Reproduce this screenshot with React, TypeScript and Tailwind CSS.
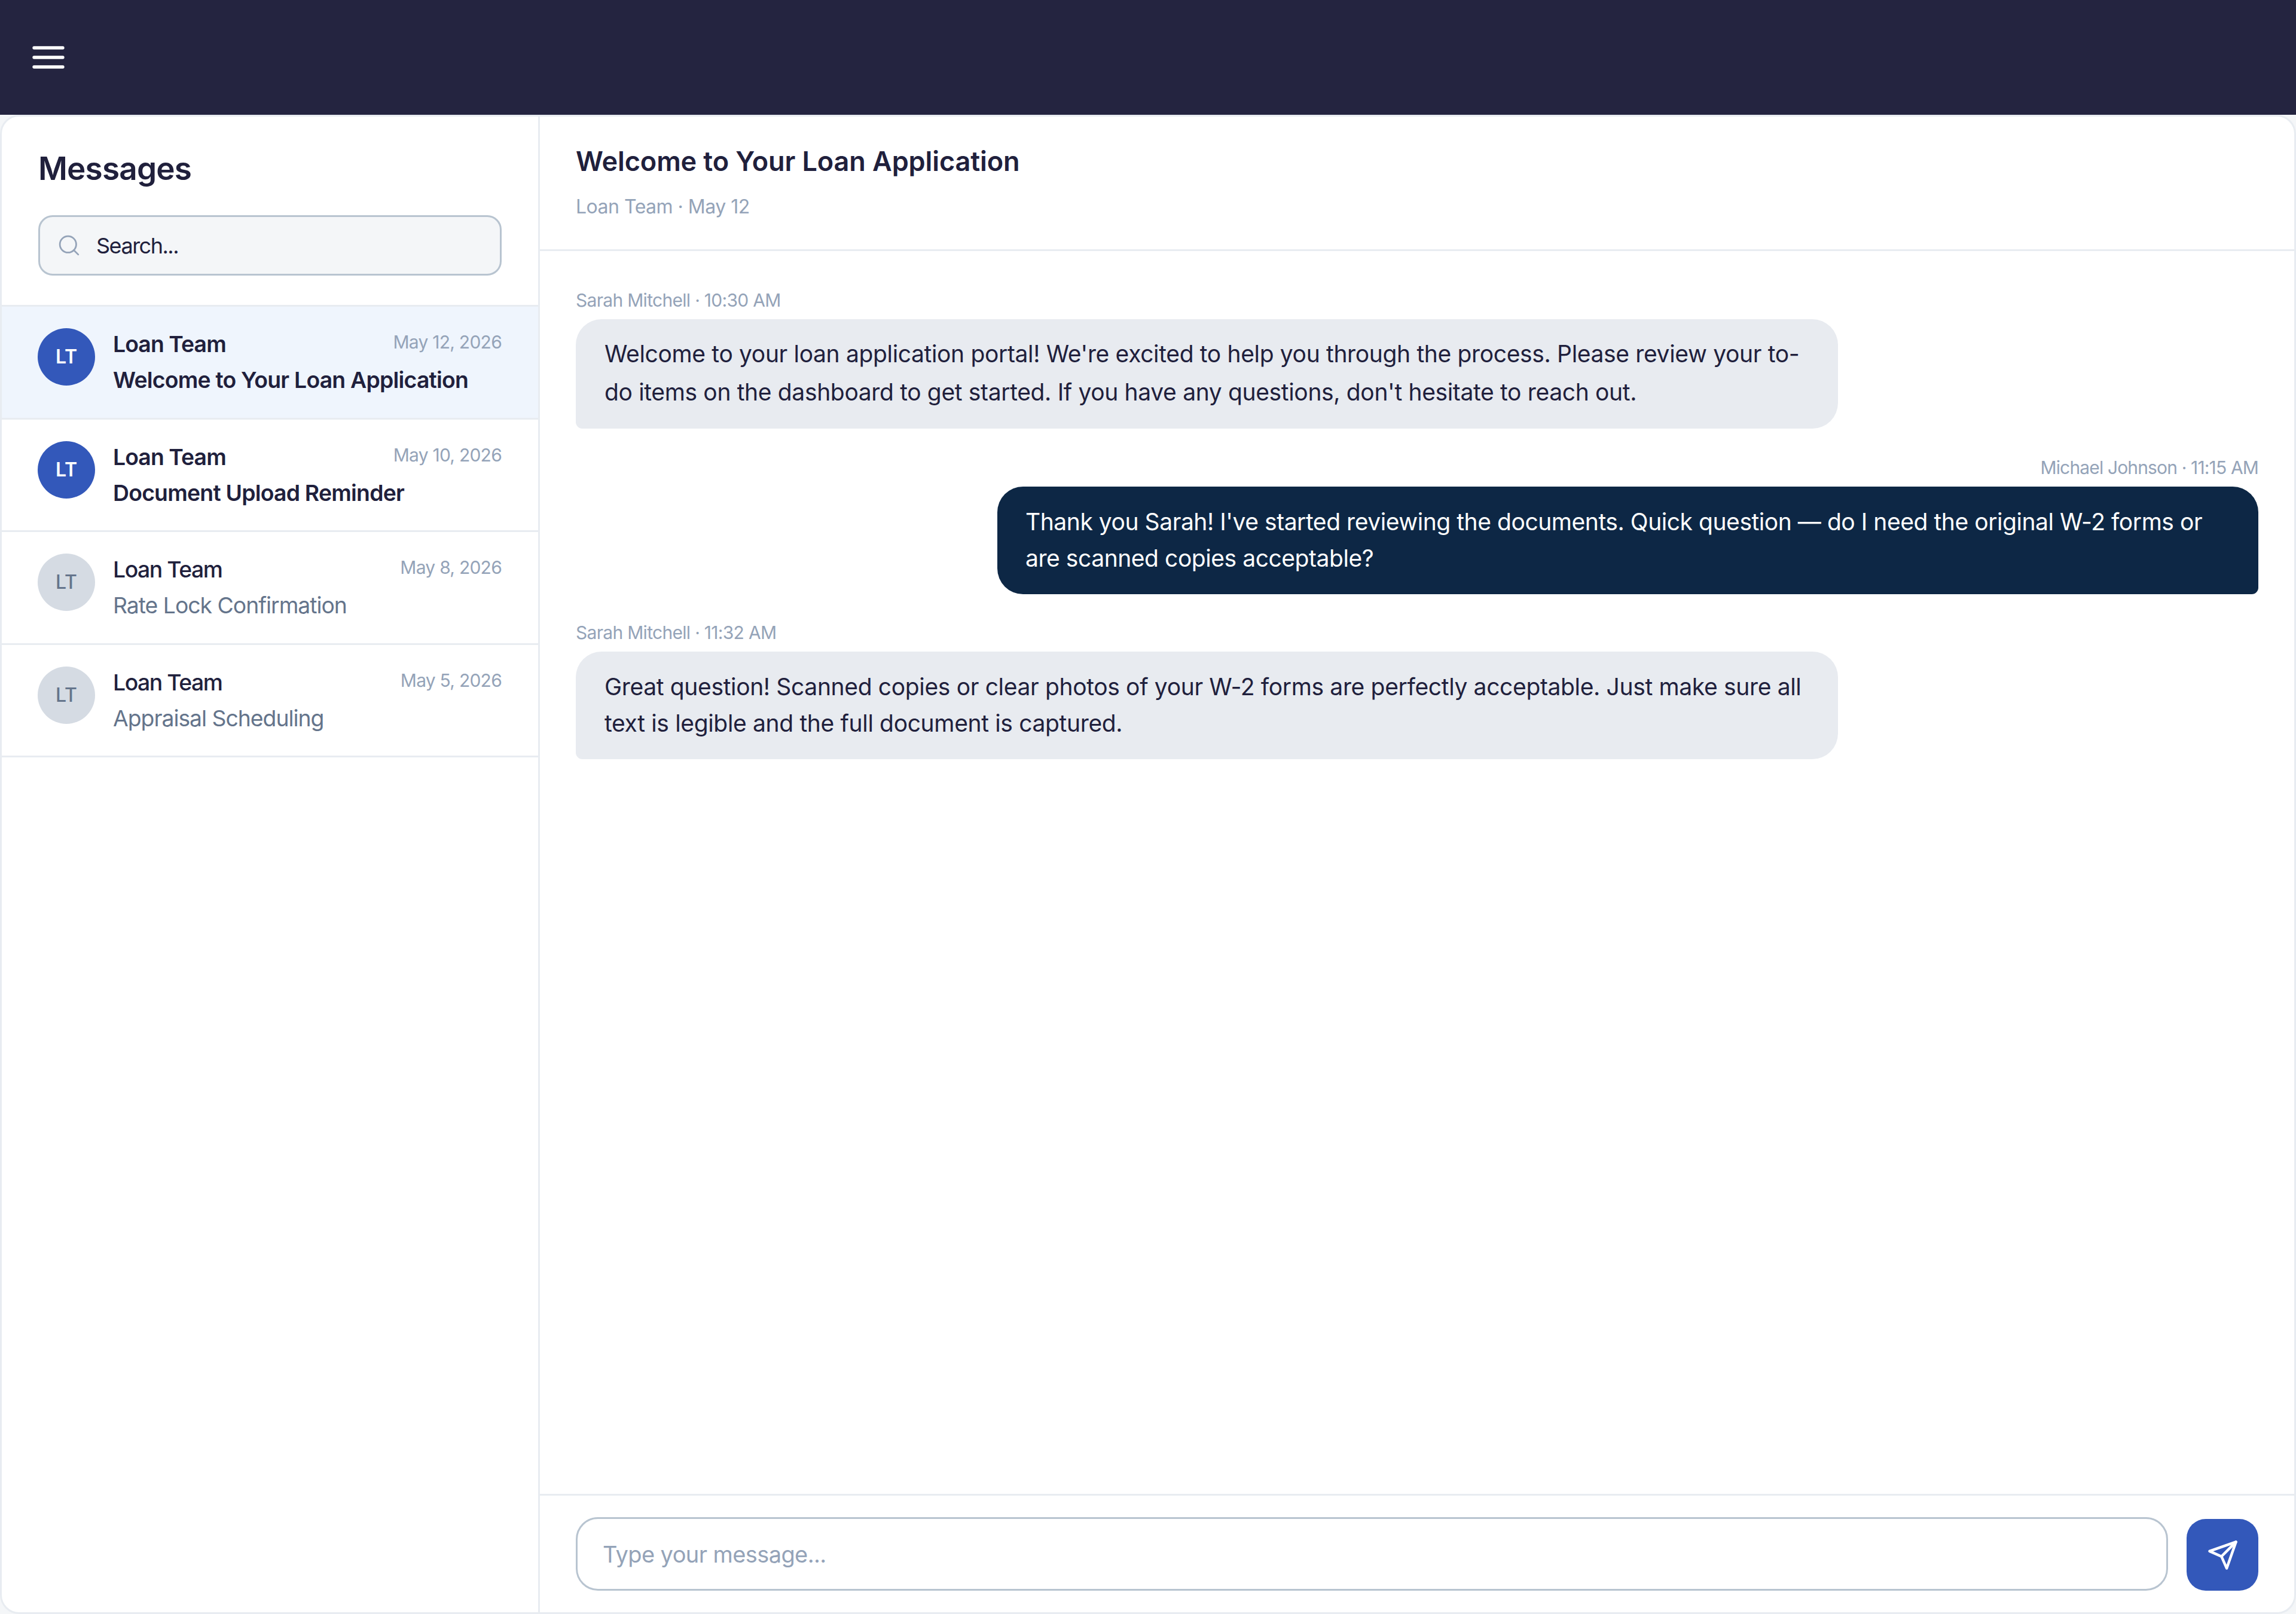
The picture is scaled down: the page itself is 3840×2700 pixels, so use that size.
const threads = [
  { name: "Loan Team", date: "May 12, 2026", subject: "Welcome to Your Loan Application", unread: true, active: true },
  { name: "Loan Team", date: "May 10, 2026", subject: "Document Upload Reminder", unread: true, active: false },
  { name: "Loan Team", date: "May 8, 2026", subject: "Rate Lock Confirmation", unread: false, active: false },
  { name: "Loan Team", date: "May 5, 2026", subject: "Appraisal Scheduling", unread: false, active: false },
];

function ThreadRow({ thread }: { thread: (typeof threads)[number] }) {
  return (
    <div className={`flex h-[188.5px] gap-[30px] border-b-[3px] border-[#e8ecf1] pt-[36px] pr-[61px] pl-[60px] ${thread.active ? "bg-[#eff5fd]" : ""}`}>
      <div className={`flex h-[96px] w-[96px] shrink-0 items-center justify-center rounded-full text-[32px] ${thread.unread ? "bg-[#3358ba] font-semibold text-white" : "bg-[#d5dbe3] font-medium text-[#64748b]"}`}>
        LT
      </div>
      <div className="min-w-0 flex-1">
        <div className="flex items-start justify-between">
          <span className={`text-[37.3px] leading-[54px] text-[#20203c] ${thread.unread ? "font-semibold tracking-[-0.9px]" : "font-medium tracking-[-1.45px]"}`}>{thread.name}</span>
          <span className="text-[30px] leading-[47px] tracking-[-0.75px] text-[#94a3b8]">{thread.date}</span>
        </div>
        <div className={`mt-[6px] text-[37.3px] leading-[54px] ${thread.unread ? "font-semibold tracking-[-0.75px] text-[#20203c]" : "tracking-[-1px] text-[#64748b]"}`}>
          {thread.subject}
        </div>
      </div>
    </div>
  );
}

function Bubble({ meta, mine, className, children }: { meta: string; mine?: boolean; className?: string; children: React.ReactNode }) {
  return (
    <div className={`flex flex-col ${mine ? "items-end" : "items-start"}`}>
      <div className={`mb-[11px] text-[30px] leading-[42px] text-[#94a3b8] ${mine ? "tracking-[-0.85px]" : "tracking-[-0.7px]"}`}>{meta}</div>
      <div className={`rounded-[43px] text-[39px] ${className ?? ""} ${mine ? "rounded-br-[11px] bg-[#0d2745] text-white" : "rounded-bl-[11px] bg-[#e8ebf0] text-[#20203c]"}`}>
        {children}
      </div>
    </div>
  );
}

export default function App() {
  return (
    <div className="flex h-[2700px] w-[3840px] flex-col bg-[#f4f6f8] font-['Inter',sans-serif]">
      <header className="flex h-[192px] shrink-0 items-center bg-[#242440] pl-[49px]">
        <svg width="64" height="64" viewBox="0 0 24 24" fill="none" stroke="white" strokeWidth="2" strokeLinecap="round">
          <line x1="3" y1="6" x2="21" y2="6" />
          <line x1="3" y1="12" x2="21" y2="12" />
          <line x1="3" y1="18" x2="21" y2="18" />
        </svg>
      </header>

      <div className="flex min-h-0 flex-1 overflow-hidden rounded-[32px] border-[3px] border-[#e8ecf1] bg-white">
        <aside className="flex w-[900px] shrink-0 flex-col border-r-[3px] border-[#e8ecf1]">
          <div className="border-b-[3px] border-[#e8ecf1] px-[61px] pt-[50px] pb-[49px]">
            <h1 className="mb-[40px] text-[53px] leading-[75px] font-semibold tracking-[-0.8px] text-[#20203c]">Messages</h1>
            <div className="flex h-[101px] items-center gap-[25px] rounded-[24px] border-[3px] border-[#b8c4d0] bg-[#f4f6f8] pl-[28px]">
              <svg width="41" height="41" viewBox="0 0 24 24" fill="none" stroke="#94a3b8" strokeWidth="1.6" strokeLinecap="round">
                <circle cx="11" cy="11" r="8" />
                <line x1="21" y1="21" x2="16.65" y2="16.65" />
              </svg>
              <span className="text-[36px] tracking-[-1.5px] text-[#20203c]">Search...</span>
            </div>
          </div>
          {threads.map((t) => (
            <ThreadRow key={t.date} thread={t} />
          ))}
        </aside>

        <main className="flex min-w-0 flex-1 flex-col">
          <div className="border-b-[3px] border-[#e8ecf1] px-[60px] pt-[44px] pb-[48px]">
            <h2 className="text-[45px] leading-[62px] font-semibold tracking-[-0.1px] text-[#20203c]">Welcome to Your Loan Application</h2>
            <div className="mt-[22px] text-[32px] leading-[46px] tracking-[-0.5px] text-[#94a3b8]">Loan Team · May 12</div>
          </div>

          <div className="flex flex-1 flex-col gap-[43.5px] px-[60px] pt-[61px]">
            <Bubble meta="Sarah Mitchell · 10:30 AM" className="w-[2111px] px-[48px] pt-[26px] pb-[29px] leading-[64px] tracking-[-0.35px]">
              Welcome to your loan application portal! We're excited to help you through the process. Please review your to-do items on the dashboard to get started. If you have any questions, don't hesitate to reach out.
            </Bubble>
            <Bubble meta="Michael Johnson · 11:15 AM" mine className="w-[2109px] pt-[28px] pr-[48px] pb-[30px] pl-[47px] leading-[61px] tracking-[-0.45px]">
              Thank you Sarah! I've started reviewing the documents. Quick question — do I need the original W-2 forms or are scanned copies acceptable?
            </Bubble>
            <Bubble meta="Sarah Mitchell · 11:32 AM" className="w-[2111px] px-[48px] pt-[28px] pb-[30px] leading-[61px] tracking-[-0.35px]">
              Great question! Scanned copies or clear photos of your W-2 forms are perfectly acceptable. Just make sure all text is legible and the full document is captured.
            </Bubble>
          </div>

          <div className="flex items-end gap-[31px] border-t-[3px] border-[#e8ecf1] px-[60px] py-[36px]">
            <input
              placeholder="Type your message..."
              className="h-[123px] flex-1 rounded-[37px] border-[3px] border-[#b8c4d0] bg-white px-[42px] text-[38px] tracking-[-0.6px] text-[#20203c] outline-none placeholder:text-[#94a3b8]"
            />
            <button className="flex h-[120px] w-[120px] shrink-0 items-center justify-center rounded-[32px] bg-[#3358ba]">
              <svg width="53" height="53" viewBox="0 0 24 24" fill="none" stroke="white" strokeWidth="2" strokeLinecap="round" strokeLinejoin="round">
                <line x1="22" y1="2" x2="11" y2="13" />
                <polygon points="22 2 15 22 11 13 2 9 22 2" />
              </svg>
            </button>
          </div>
        </main>
      </div>
    </div>
  );
}
